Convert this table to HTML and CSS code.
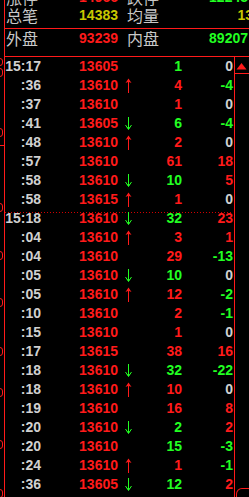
FILE: index.html
```html
<!DOCTYPE html>
<html lang="zh">
<head>
<meta charset="utf-8">
<title>分笔成交</title>
<link rel="stylesheet" href="styles.css">
</head>
<body>
<div class="screen">
  <div class="lstrip">
    <div class="frag f1"></div>
    <div class="frag f2"></div>
    <div class="frag f3"></div>
    <div class="tick t1"></div>
    <div class="frag f4"></div>
    <div class="frag f5"></div>
    <div class="frag f6"></div>
    <div class="frag f7"></div>
    <div class="frag f8"></div>
    <div class="frag f9"></div>
    <div class="frag f10"></div>
  </div>
  <div class="main">
    <div class="head">
      <div class="hrow r1"><span class="lbl">涨停</span><span class="num red">14966</span><span></span><span class="lbl">跌停</span><span class="num green">12245</span></div>
      <div class="hrow r2"><span class="lbl">总笔</span><span class="num yellow">14383</span><span></span><span class="lbl">均量</span><span class="num yellow over">13</span></div>
      <div class="hrow r3"><span class="lbl">外盘</span><span class="num red">93239</span><span></span><span class="lbl">内盘</span><span class="num green">89207</span></div>
    </div>
    <div class="body">
      <div class="list">
        <div class="row"><span class="t">15:17</span><span class="p">13605</span><span class="a"></span><span class="v green">1</span><span class="c gray">0</span></div>
        <div class="row"><span class="t">:36</span><span class="p">13610</span><span class="a"><svg class="up" width="7" height="15" viewBox="0 0 7 15"><path d="M3.5 1 V15" stroke="#ff1a1a" stroke-width="1"/><path d="M3.5 0.5 L0.5 5 L3 4 L3.5 5 L4 4 L6.5 5 Z" fill="#ff1a1a"/></svg></span><span class="v red">4</span><span class="c green">-4</span></div>
        <div class="row"><span class="t">:37</span><span class="p">13610</span><span class="a"></span><span class="v red">1</span><span class="c gray">0</span></div>
        <div class="row"><span class="t">:41</span><span class="p">13605</span><span class="a"><svg class="dn" width="7" height="13" viewBox="0 0 7 13"><path d="M3.5 0 V11" stroke="#22ff22" stroke-width="1"/><path d="M0.5 8 L3.5 12.5 L6.5 8" stroke="#22ff22" stroke-width="1" fill="none"/><path d="M2 10 H5 L3.5 12.5 Z" fill="#22ff22"/></svg></span><span class="v green">6</span><span class="c green">-4</span></div>
        <div class="row"><span class="t">:48</span><span class="p">13610</span><span class="a"><svg class="up" width="7" height="15" viewBox="0 0 7 15"><path d="M3.5 1 V15" stroke="#ff1a1a" stroke-width="1"/><path d="M3.5 0.5 L0.5 5 L3 4 L3.5 5 L4 4 L6.5 5 Z" fill="#ff1a1a"/></svg></span><span class="v red">2</span><span class="c gray">0</span></div>
        <div class="row"><span class="t">:57</span><span class="p">13610</span><span class="a"></span><span class="v red">61</span><span class="c red">18</span></div>
        <div class="row"><span class="t">:58</span><span class="p">13610</span><span class="a"><svg class="dn" width="7" height="13" viewBox="0 0 7 13"><path d="M3.5 0 V11" stroke="#22ff22" stroke-width="1"/><path d="M0.5 8 L3.5 12.5 L6.5 8" stroke="#22ff22" stroke-width="1" fill="none"/><path d="M2 10 H5 L3.5 12.5 Z" fill="#22ff22"/></svg></span><span class="v green">10</span><span class="c red">5</span></div>
        <div class="row"><span class="t">:58</span><span class="p">13615</span><span class="a"><svg class="up" width="7" height="15" viewBox="0 0 7 15"><path d="M3.5 1 V15" stroke="#ff1a1a" stroke-width="1"/><path d="M3.5 0.5 L0.5 5 L3 4 L3.5 5 L4 4 L6.5 5 Z" fill="#ff1a1a"/></svg></span><span class="v red">1</span><span class="c gray">0</span></div>
        <div class="row sep"><span class="t">15:18</span><span class="p">13610</span><span class="a"><svg class="dn" width="7" height="13" viewBox="0 0 7 13"><path d="M3.5 0 V11" stroke="#22ff22" stroke-width="1"/><path d="M0.5 8 L3.5 12.5 L6.5 8" stroke="#22ff22" stroke-width="1" fill="none"/><path d="M2 10 H5 L3.5 12.5 Z" fill="#22ff22"/></svg></span><span class="v green">32</span><span class="c red">23</span></div>
        <div class="row"><span class="t">:04</span><span class="p">13610</span><span class="a"><svg class="up" width="7" height="15" viewBox="0 0 7 15"><path d="M3.5 1 V15" stroke="#ff1a1a" stroke-width="1"/><path d="M3.5 0.5 L0.5 5 L3 4 L3.5 5 L4 4 L6.5 5 Z" fill="#ff1a1a"/></svg></span><span class="v red">3</span><span class="c red">1</span></div>
        <div class="row"><span class="t">:04</span><span class="p">13610</span><span class="a"></span><span class="v red">29</span><span class="c green">-13</span></div>
        <div class="row"><span class="t">:05</span><span class="p">13610</span><span class="a"><svg class="dn" width="7" height="13" viewBox="0 0 7 13"><path d="M3.5 0 V11" stroke="#22ff22" stroke-width="1"/><path d="M0.5 8 L3.5 12.5 L6.5 8" stroke="#22ff22" stroke-width="1" fill="none"/><path d="M2 10 H5 L3.5 12.5 Z" fill="#22ff22"/></svg></span><span class="v green">10</span><span class="c gray">0</span></div>
        <div class="row"><span class="t">:05</span><span class="p">13610</span><span class="a"><svg class="up" width="7" height="15" viewBox="0 0 7 15"><path d="M3.5 1 V15" stroke="#ff1a1a" stroke-width="1"/><path d="M3.5 0.5 L0.5 5 L3 4 L3.5 5 L4 4 L6.5 5 Z" fill="#ff1a1a"/></svg></span><span class="v red">12</span><span class="c green">-2</span></div>
        <div class="row"><span class="t">:10</span><span class="p">13610</span><span class="a"></span><span class="v red">2</span><span class="c green">-1</span></div>
        <div class="row"><span class="t">:15</span><span class="p">13610</span><span class="a"></span><span class="v red">1</span><span class="c gray">0</span></div>
        <div class="row"><span class="t">:17</span><span class="p">13615</span><span class="a"></span><span class="v red">38</span><span class="c red">16</span></div>
        <div class="row"><span class="t">:18</span><span class="p">13610</span><span class="a"><svg class="dn" width="7" height="13" viewBox="0 0 7 13"><path d="M3.5 0 V11" stroke="#22ff22" stroke-width="1"/><path d="M0.5 8 L3.5 12.5 L6.5 8" stroke="#22ff22" stroke-width="1" fill="none"/><path d="M2 10 H5 L3.5 12.5 Z" fill="#22ff22"/></svg></span><span class="v green">32</span><span class="c green">-22</span></div>
        <div class="row"><span class="t">:18</span><span class="p">13610</span><span class="a"><svg class="up" width="7" height="15" viewBox="0 0 7 15"><path d="M3.5 1 V15" stroke="#ff1a1a" stroke-width="1"/><path d="M3.5 0.5 L0.5 5 L3 4 L3.5 5 L4 4 L6.5 5 Z" fill="#ff1a1a"/></svg></span><span class="v red">10</span><span class="c gray">0</span></div>
        <div class="row"><span class="t">:19</span><span class="p">13610</span><span class="a"></span><span class="v red">16</span><span class="c red">8</span></div>
        <div class="row"><span class="t">:20</span><span class="p">13610</span><span class="a"><svg class="dn" width="7" height="13" viewBox="0 0 7 13"><path d="M3.5 0 V11" stroke="#22ff22" stroke-width="1"/><path d="M0.5 8 L3.5 12.5 L6.5 8" stroke="#22ff22" stroke-width="1" fill="none"/><path d="M2 10 H5 L3.5 12.5 Z" fill="#22ff22"/></svg></span><span class="v green">2</span><span class="c red">2</span></div>
        <div class="row"><span class="t">:20</span><span class="p">13610</span><span class="a"></span><span class="v green">15</span><span class="c green">-3</span></div>
        <div class="row"><span class="t">:24</span><span class="p">13610</span><span class="a"><svg class="up" width="7" height="15" viewBox="0 0 7 15"><path d="M3.5 1 V15" stroke="#ff1a1a" stroke-width="1"/><path d="M3.5 0.5 L0.5 5 L3 4 L3.5 5 L4 4 L6.5 5 Z" fill="#ff1a1a"/></svg></span><span class="v red">1</span><span class="c green">-1</span></div>
        <div class="row"><span class="t">:36</span><span class="p">13605</span><span class="a"><svg class="dn" width="7" height="13" viewBox="0 0 7 13"><path d="M3.5 0 V11" stroke="#22ff22" stroke-width="1"/><path d="M0.5 8 L3.5 12.5 L6.5 8" stroke="#22ff22" stroke-width="1" fill="none"/><path d="M2 10 H5 L3.5 12.5 Z" fill="#22ff22"/></svg></span><span class="v green">12</span><span class="c red">2</span></div>
      </div>
      <div class="rstrip">
        <div class="upbtn"><svg width="14" height="16" viewBox="0 0 14 16"><path d="M6.5 6 L11.5 12.5 L1.5 12.5 Z" fill="#ff1a1a"/></svg></div>
        <div class="dnbtn"></div>
      </div>
    </div>
  </div>
</div>
</body>
</html>
```

FILE: styles.css
```css
html, body {
  margin: 0;
  padding: 0;
  background: #000;
}
body {
  width: 249px;
  height: 497px;
  overflow: hidden;
}
.screen {
  display: flex;
  width: 249px;
  height: 497px;
  overflow: hidden;
}
.lstrip {
  flex: none;
  width: 4px;
  display: flex;
  flex-direction: column;
  overflow: hidden;
}
.frag {
  flex: none;
  box-sizing: border-box;
  width: 8px;
  height: 9px;
  margin-left: -5px;
  border: 1px solid #ff1a1a;
  border-radius: 3px;
}
.tick {
  flex: none;
  width: 4px;
  height: 1px;
  background: #ff1a1a;
}
.f1 { margin-top: 58px; height: 8px; }
.f2 { margin-top: 2px; }
.f3 { margin-top: 51px; }
.t1 { margin-top: 8px; }
.f4 { margin-top: 57px; }
.f5 { margin-top: 39px; }
.f6 { margin-top: 38px; }
.f7 { margin-top: 40px; }
.f8 { margin-top: 32px; }
.f9 { margin-top: 43px; }
.f10 { margin-top: 40px; }

.main {
  flex: 1;
  display: flex;
  flex-direction: column;
  border-left: 1px solid #ff1a1a;
  min-width: 0;
}
.head {
  flex: none;
  margin-top: -10px;
  border-bottom: 1px solid #ff1a1a;
}
.hrow {
  display: grid;
  grid-template-columns: 33px 79px 9px 33px 1fr;
  padding-left: 1px;
  padding-right: 1px;
}
.hrow.r1 { height: 15px; line-height: 15px; }
.hrow.r2 { height: 23px; line-height: 21px; border-bottom: 1px solid #ff1a1a; }
.hrow.r3 { height: 27px; line-height: 19px; }
.lbl {
  font-family: "Noto Sans CJK SC", sans-serif;
  font-size: 16px;
  color: #c8c8c8;
  white-space: nowrap;
}
.num {
  font-family: "Liberation Sans", Arial, sans-serif;
  font-weight: bold;
  font-size: 14px;
  text-align: right;
  white-space: nowrap;
}
.num.over { margin-right: -5px; }

.red { color: #ff1a1a; }
.green { color: #22ff22; }
.yellow { color: #c8c800; }
.gray { color: #d0d0d0; }

.body {
  flex: 1;
  display: flex;
  min-height: 0;
}
.list {
  flex: none;
  width: 229px;
  border-right: 1px solid #ff1a1a;
  overflow: hidden;
}
.row {
  display: grid;
  grid-template-columns: 36px 77px 22px 42px 51px;
  height: 19px;
  line-height: 19px;
  font-family: "Liberation Sans", Arial, sans-serif;
  font-weight: bold;
  font-size: 14px;
  white-space: nowrap;
}
.row.sep {
  background: repeating-linear-gradient(90deg, #d00000 0 1px, transparent 1px 3px) no-repeat 0 3px / 227px 1px;
}
.t {
  color: #d0d0d0;
  text-align: right;
}
.p {
  color: #ff1a1a;
  text-align: right;
}
.a {
  display: flex;
  align-items: flex-start;
}
.a svg { display: block; margin-left: 7px; }
.a svg.up { margin-top: 2px; }
.a svg.dn { margin-top: 3px; }
.v, .c { text-align: right; }

.rstrip {
  flex: 1;
  display: flex;
  flex-direction: column;
  overflow: hidden;
}
.upbtn {
  flex: none;
  box-sizing: border-box;
  height: 17px;
  border-bottom: 1px solid #ff1a1a;
}
.upbtn svg { display: block; }
.dnbtn {
  flex: none;
  margin-top: auto;
  margin-left: 1px;
  box-sizing: border-box;
  width: 18px;
  height: 9px;
  border: 1px solid #ff1a1a;
  border-bottom: none;
  border-radius: 6px 6px 0 0;
}
```
